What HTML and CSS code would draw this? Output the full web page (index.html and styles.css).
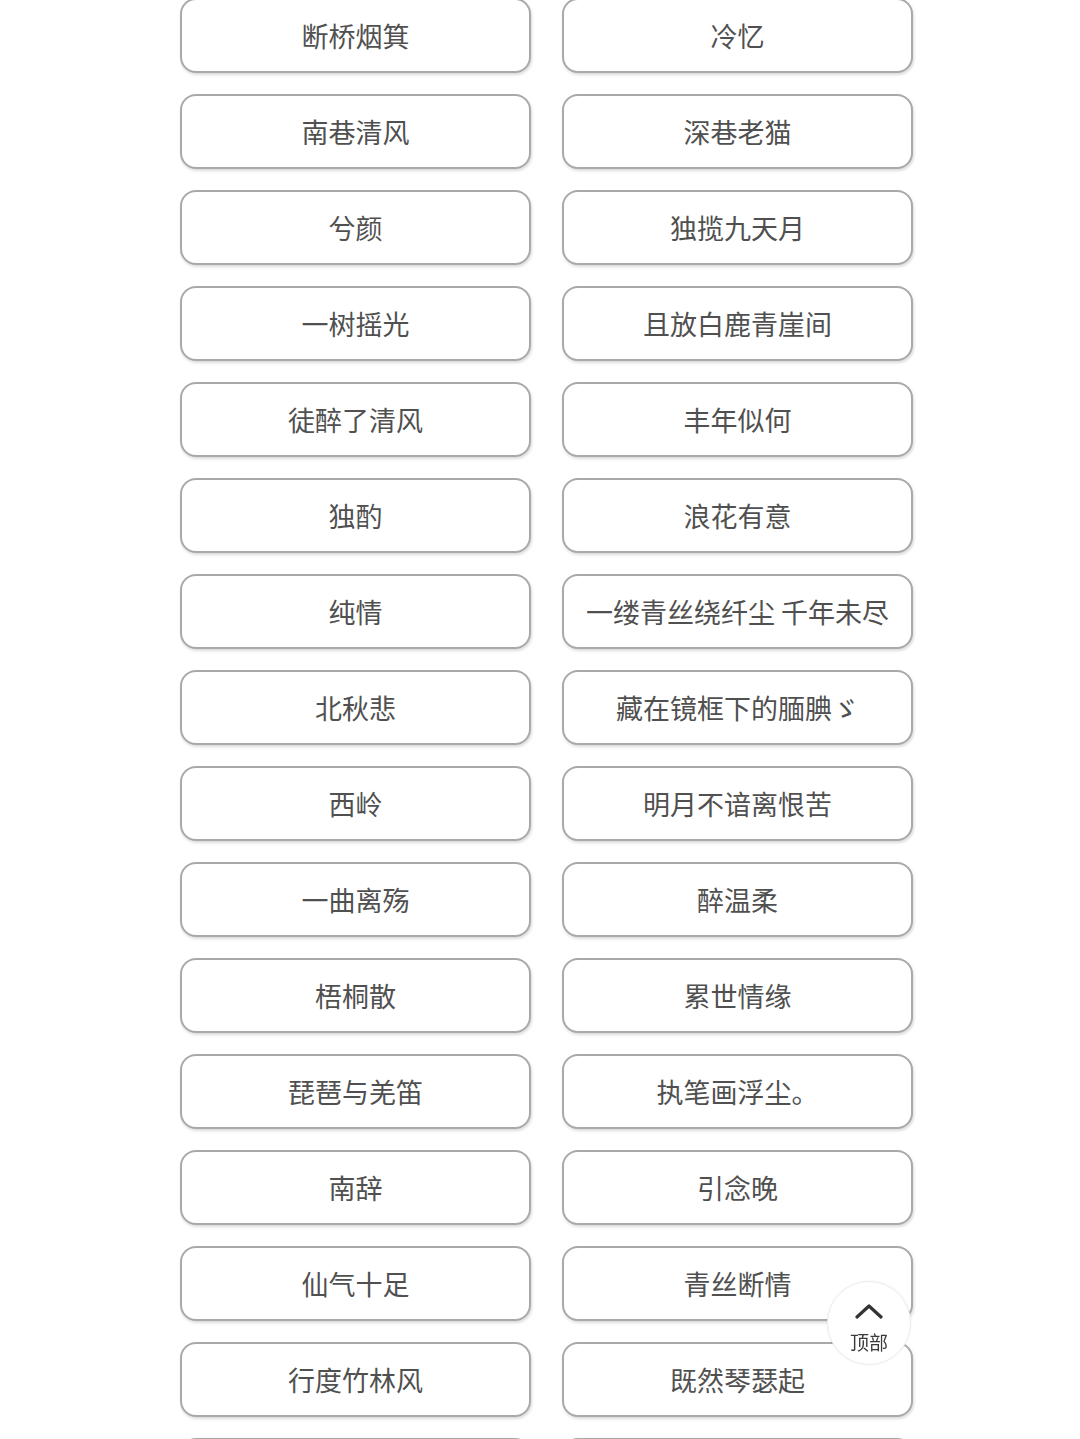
FILE: index.html
```html
<!DOCTYPE html>
<html lang="zh-CN">
<head>
<meta charset="utf-8">
<title>网名</title>
<link rel="stylesheet" href="styles.css">
</head>
<body>
<main class="names">
  <button class="name">断桥烟箕</button>
  <button class="name">冷忆</button>
  <button class="name">南巷清风</button>
  <button class="name">深巷老猫</button>
  <button class="name">兮颜</button>
  <button class="name">独揽九天月</button>
  <button class="name">一树摇光</button>
  <button class="name">且放白鹿青崖间</button>
  <button class="name">徒醉了清风</button>
  <button class="name">丰年似何</button>
  <button class="name">独酌</button>
  <button class="name">浪花有意</button>
  <button class="name">纯情</button>
  <button class="name">一缕青丝绕纤尘 千年未尽</button>
  <button class="name">北秋悲</button>
  <button class="name">藏在镜框下的腼腆ゞ</button>
  <button class="name">西岭</button>
  <button class="name">明月不谙离恨苦</button>
  <button class="name">一曲离殇</button>
  <button class="name">醉温柔</button>
  <button class="name">梧桐散</button>
  <button class="name">累世情缘</button>
  <button class="name">琵琶与羌笛</button>
  <button class="name">执笔画浮尘。</button>
  <button class="name">南辞</button>
  <button class="name">引念晚</button>
  <button class="name">仙气十足</button>
  <button class="name">青丝断情</button>
  <button class="name">行度竹林风</button>
  <button class="name">既然琴瑟起</button>
  <button class="name"></button>
  <button class="name"></button>
</main>

<a class="to-top" href="#">
  <svg class="to-top-icon" width="30" height="16" viewBox="0 0 30 16">
    <polyline points="3,14 15,3 27,14" fill="none" stroke="#333" stroke-width="3.2" stroke-linecap="round" stroke-linejoin="round"/>
  </svg>
  <span class="to-top-label">顶部</span>
</a>
</body>
</html>
```

FILE: styles.css
```css
html, body {
  margin: 0;
  padding: 0;
  background: #ffffff;
  overflow: hidden;
}

body {
  font-family: "Noto Sans CJK SC", "Noto Sans", sans-serif;
}

.names {
  display: grid;
  grid-template-columns: 351px 351px;
  grid-auto-rows: 75px;
  column-gap: 31px;
  row-gap: 21px;
  padding-left: 180px;
  margin-top: -2px;
}

.name {
  display: flex;
  align-items: center;
  justify-content: center;
  box-sizing: border-box;
  margin: 0;
  padding: 0 6px;
  background: #ffffff;
  border: 2px solid #a9a9a9;
  border-radius: 16px;
  box-shadow: 1px 2px 3px rgba(0, 0, 0, 0.14);
  font-family: inherit;
  font-size: 27px;
  color: #505050;
  white-space: nowrap;
}

.to-top {
  position: fixed;
  left: 827px;
  top: 1281px;
  width: 84px;
  height: 84px;
  box-sizing: border-box;
  border-radius: 50%;
  background: #ffffff;
  border: 1px solid #ececec;
  box-shadow: 0 0 3px rgba(0, 0, 0, 0.06);
  display: flex;
  flex-direction: column;
  align-items: center;
  text-decoration: none;
  padding-top: 21px;
}

.to-top-icon {
  display: block;
}

.to-top-label {
  margin-top: 12px;
  font-size: 19px;
  line-height: 22px;
  color: #3a3a3a;
}
```
